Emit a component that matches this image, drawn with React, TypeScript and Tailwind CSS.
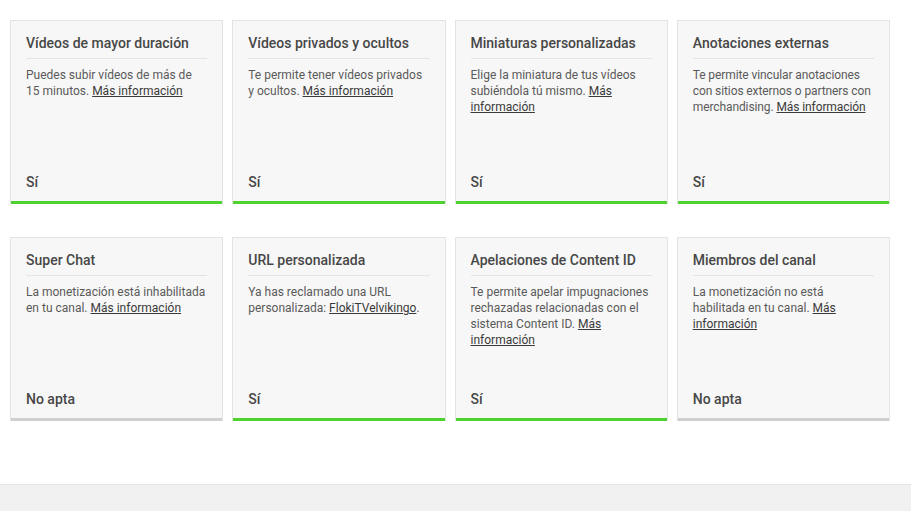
import React from "react";

type Card = { title: string; desc: React.ReactNode; value: string; ok: boolean; tight?: boolean };

const Link = ({ children }: { children: React.ReactNode }) => (
  <span className="underline text-[#3a3a3a]">{children}</span>
);

const cards: Card[] = [
  { title: "Vídeos de mayor duración", desc: <>Puedes subir vídeos de más de 15 minutos. <Link>Más información</Link></>, value: "Sí", ok: true },
  { title: "Vídeos privados y ocultos", desc: <>Te permite tener vídeos privados y ocultos. <Link>Más información</Link></>, value: "Sí", ok: true },
  { title: "Miniaturas personalizadas", desc: <>Elige la miniatura de tus vídeos subiéndola tú mismo. <Link>Más información</Link></>, value: "Sí", ok: true },
  { title: "Anotaciones externas", desc: <>Te permite vincular anotaciones con sitios externos o partners con merchandising. <Link>Más información</Link></>, value: "Sí", ok: true, tight: true },
  { title: "Super Chat", desc: <>La monetización está inhabilitada en tu canal. <Link>Más información</Link></>, value: "No apta", ok: false },
  { title: "URL personalizada", desc: <>Ya has reclamado una URL personalizada: <Link>FlokiTVelvikingo</Link>.</>, value: "Sí", ok: true },
  { title: "Apelaciones de Content ID", desc: <>Te permite apelar impugnaciones rechazadas relacionadas con el sistema Content ID. <Link>Más información</Link></>, value: "Sí", ok: true },
  { title: "Miembros del canal", desc: <>La monetización no está habilitada en tu canal. <Link>Más información</Link></>, value: "No apta", ok: false },
];

function FeatureCard({ c }: { c: Card }) {
  return (
    <div
      className={`flex h-[184px] flex-col border border-b-0 border-[#e3e3e3] bg-[#f7f7f7] ${
        c.ok ? "shadow-[inset_0_-3px_0_#4fd12f]" : "shadow-[inset_0_-3px_0_#cfcfcf]"
      }`}
    >
      <div className="mx-[15px] border-b border-[#e4e4e4] pt-[12px] pb-[5px] text-[14px] leading-[20px] font-medium text-[#474747]">
        {c.title}
      </div>
      <div
        className={`mx-[15px] mt-[8px] flex-1 text-[12px] leading-[16px] text-[#5a5a5a] ${
          c.tight ? "tracking-[-0.1px]" : ""
        }`}
      >
        {c.desc}
      </div>
      <div className="mx-[15px] pb-[12px] text-[14px] leading-[20px] font-medium text-[#474747]">{c.value}</div>
    </div>
  );
}

export default function App() {
  return (
    <div className="flex h-[511px] w-[911px] flex-col bg-white" style={{ fontFamily: "Roboto, 'Noto Sans', sans-serif" }}>
      <div className="flex-1 pl-[10px] pr-[21px] pt-[20px]">
        <div className="grid grid-cols-4 gap-x-[9px] gap-y-[33px]">
          {cards.map((c) => (
            <FeatureCard key={c.title} c={c} />
          ))}
        </div>
      </div>
      <div className="h-[27px] border-t border-[#e6e6e6] bg-[#f1f1f1]" />
    </div>
  );
}
